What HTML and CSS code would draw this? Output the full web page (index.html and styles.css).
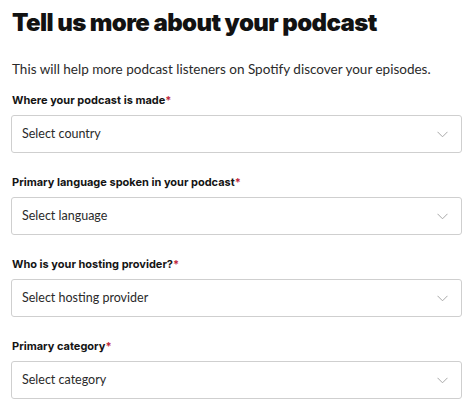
FILE: index.html
```html
<!DOCTYPE html>
<html lang="en">
<head>
<meta charset="utf-8">
<title>Tell us more about your podcast</title>
<link rel="stylesheet" href="styles.css">
</head>
<body>
<main class="page">
  <h1 class="title">Tell us more about your podcast</h1>
  <p class="intro">This will help more podcast listeners on Spotify discover your episodes.</p>
  <div class="field">
    <label class="label">Where your podcast is made<span class="req">*</span></label>
    <div class="select"><span class="placeholder">Select country</span><svg class="chev" width="11" height="7" viewBox="0 0 11 7"><path d="M0.5 0.8 L5.5 5.8 L10.5 0.8" fill="none" stroke="#a8a8a8" stroke-width="1"/></svg></div>
  </div>
  <div class="field">
    <label class="label">Primary language spoken in your podcast<span class="req">*</span></label>
    <div class="select"><span class="placeholder">Select language</span><svg class="chev" width="11" height="7" viewBox="0 0 11 7"><path d="M0.5 0.8 L5.5 5.8 L10.5 0.8" fill="none" stroke="#a8a8a8" stroke-width="1"/></svg></div>
  </div>
  <div class="field">
    <label class="label">Who is your hosting provider?<span class="req">*</span></label>
    <div class="select"><span class="placeholder">Select hosting provider</span><svg class="chev" width="11" height="7" viewBox="0 0 11 7"><path d="M0.5 0.8 L5.5 5.8 L10.5 0.8" fill="none" stroke="#a8a8a8" stroke-width="1"/></svg></div>
  </div>
  <div class="field">
    <label class="label">Primary category<span class="req">*</span></label>
    <div class="select"><span class="placeholder">Select category</span><svg class="chev" width="11" height="7" viewBox="0 0 11 7"><path d="M0.5 0.8 L5.5 5.8 L10.5 0.8" fill="none" stroke="#a8a8a8" stroke-width="1"/></svg></div>
  </div>
</main>
</body>
</html>
```
FILE: styles.css
```css
html, body {
  margin: 0;
  padding: 0;
  background: #ffffff;
}
body {
  font-family: Lato, "Liberation Sans", sans-serif;
  color: #191919;
}
.page {
  padding: 8px 12px 0 11px;
}
.title {
  margin: 0 0 0 1px;
  font-family: Inter, "Liberation Sans", sans-serif;
  font-size: 24px;
  line-height: 30px;
  font-weight: 900;
  letter-spacing: -0.6px;
  color: #121212;
}
.intro {
  margin: 21px 0 13px 1px;
  font-size: 13.5px;
  line-height: 20px;
  color: #2a2a2a;
  white-space: nowrap;
}
.field {
  display: flex;
  flex-direction: column;
  gap: 7px;
  margin-bottom: 21px;
}
.label {
  display: block;
  margin-left: 1px;
  font-family: Inter, "Liberation Sans", sans-serif;
  font-size: 11px;
  line-height: 16px;
  font-weight: 700;
  color: #141414;
}
.req {
  color: #c0283c;
}
.select {
  height: 38px;
  box-sizing: border-box;
  border: 1px solid #cfcfcf;
  border-radius: 3px;
  display: flex;
  align-items: center;
  justify-content: space-between;
  padding: 0 13px 0 10px;
}
.placeholder {
  font-size: 12.5px;
  line-height: 16px;
  color: #2a2a2a;
}
.chev {
  display: block;
}
```
